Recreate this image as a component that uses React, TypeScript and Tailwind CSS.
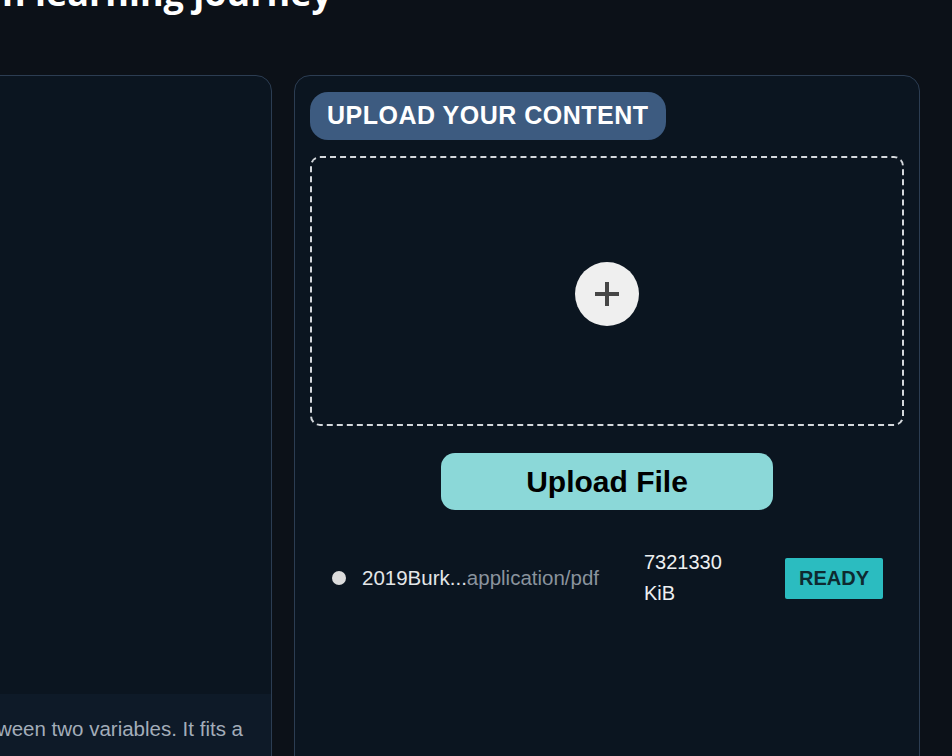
import React from 'react';

const files = [
  { name: '2019Burk...', type: 'application/pdf', size: '7321330', unit: 'KiB', status: 'READY' },
];

const App: React.FC = () => {
  return (
    <div className="w-[952px] h-[756px] overflow-hidden bg-[#0c1118] font-['Liberation_Sans',Arial,sans-serif]">
      {/* heading, scrolled mostly off the top */}
      <div className="flex justify-end w-[332px] h-[43px] -mt-[29px]">
        <h1 className="shrink-0 whitespace-nowrap text-[36px] leading-[43px] font-bold text-white font-['Open_Sans',sans-serif]">
          Start your own learning journey
        </h1>
      </div>

      <div className="flex gap-[22px] -ml-[354px] mt-[61px]">
        {/* left card: lesson text */}
        <div className="w-[626px] h-[700px] shrink-0 flex flex-col rounded-[16px] border border-[#2c3d52] bg-[#0b1520] overflow-hidden">
          <div className="flex-1" />
          <div className="h-[80px] bg-[#0e1a28] pt-[22px] pr-[28px] flex justify-end">
            <span className="shrink-0 whitespace-nowrap text-[20.5px] leading-[26px] text-[#a3adb9]">
              Linear regression models the relationship between two variables. It fits a
            </span>
          </div>
        </div>

        {/* right card: upload */}
        <div className="w-[626px] h-[700px] shrink-0 rounded-[16px] border border-[#2c3d52] bg-[#0b1520] pt-[16px] px-[15px]">
          <div className="inline-flex items-center h-[48px] px-[17px] rounded-[18px] bg-[#3d5b80]">
            <span className="text-[25px] font-bold tracking-[0.5px] text-white">UPLOAD YOUR CONTENT</span>
          </div>

          <div className="mt-[16px] h-[270px] pt-[6px] rounded-[10px] border-2 border-dashed border-[#d4d8dc] flex items-center justify-center">
            <button className="w-[64px] h-[64px] rounded-full bg-[#efefef] flex items-center justify-center">
              <svg width="26" height="26" viewBox="0 0 26 26">
                <path d="M13 1v24M1 13h24" stroke="#464646" strokeWidth="4" />
              </svg>
            </button>
          </div>

          <button className="mt-[27px] mx-auto flex items-center justify-center w-[332px] h-[57px] rounded-[14px] bg-[#8bd8d8] text-[30px] font-bold text-black">
            Upload File
          </button>

          {files.map((f) => (
            <div key={f.name} className="mt-[37px] flex items-center pl-[22px]">
              <span className="w-[14px] h-[14px] rounded-full bg-[#dcdcdc] shrink-0" />
              <div className="ml-[16px] w-[282px] text-[20.5px] leading-[30px] whitespace-nowrap">
                <span className="text-[#e4e6e8]">{f.name}</span>
                <span className="text-[#8a939d]">{f.type}</span>
              </div>
              <div className="w-[141px] text-[20px] leading-[31px] text-[#eef0f2]">
                <div>{f.size}</div>
                <div>{f.unit}</div>
              </div>
              <span className="w-[98px] h-[41px] rounded-[2px] bg-[#2bbcc0] flex items-center justify-center text-[20px] font-bold text-[#0e2a30]">
                {f.status}
              </span>
            </div>
          ))}
        </div>
      </div>
    </div>
  );
};

export default App;
